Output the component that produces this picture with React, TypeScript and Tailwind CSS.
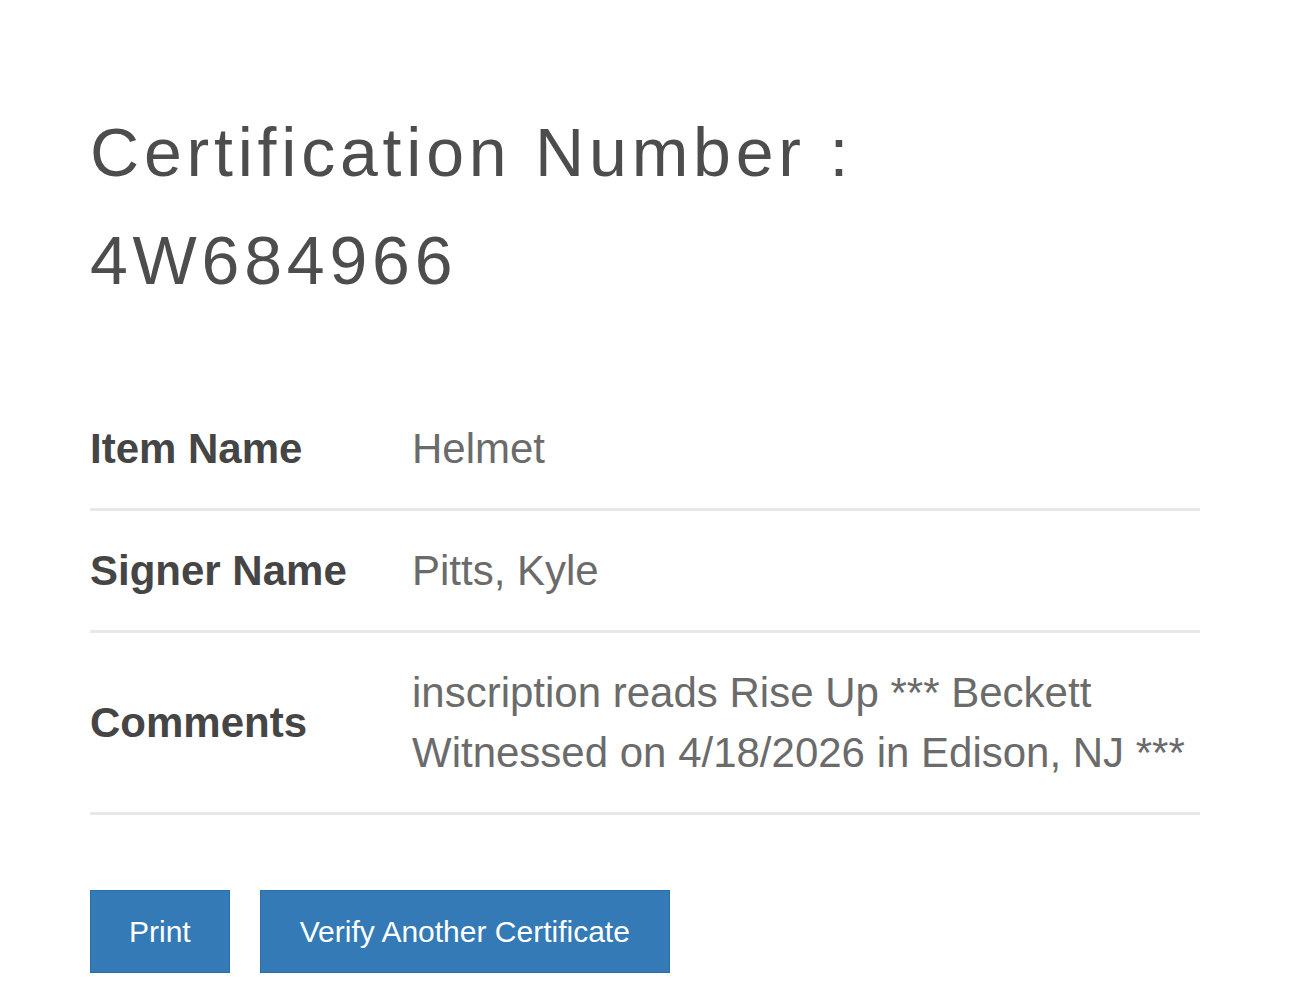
import React from "react";

const rows = [
  { label: "Item Name", value: "Helmet" },
  { label: "Signer Name", value: "Pitts, Kyle" },
  {
    label: "Comments",
    value: "inscription reads Rise Up *** Beckett Witnessed on 4/18/2026 in Edison, NJ ***",
  },
];

export default function App() {
  return (
    <div className="min-h-screen bg-white font-['Liberation_Sans',Arial,sans-serif]">
      <div className="px-[90px] pt-[98px]">
        {/* Heading */}
        <h1 className="text-[68px] leading-[108px] tracking-[4.8px] text-[#4d4d4d] font-normal">
          Certification Number :
          <br />
          4W684966
        </h1>

        {/* Details table */}
        <table className="mt-[75px] w-[1110px] border-collapse">
          <tbody>
            {rows.map((row) => (
              <tr key={row.label} className="border-b-[3px] border-[#e8e8e8]">
                <td className="w-[322px] pt-[30px] pb-[29px] align-middle text-[42px] leading-[60px] font-bold text-[#454545]">
                  {row.label}
                </td>
                <td className="pt-[30px] pb-[29px] align-middle text-[42px] leading-[60px] text-[#6b6b6b]">
                  {row.value}
                </td>
              </tr>
            ))}
          </tbody>
        </table>

        {/* Actions */}
        <div className="mt-[75px] flex gap-[30px]">
          <button className="h-[83px] px-[38px] flex items-center bg-[#337ab7] border border-[#2e6da4] text-white text-[30px]">
            Print
          </button>
          <button className="h-[83px] px-[39px] flex items-center bg-[#337ab7] border border-[#2e6da4] text-white text-[30px]">
            Verify Another Certificate
          </button>
        </div>
      </div>
    </div>
  );
}
